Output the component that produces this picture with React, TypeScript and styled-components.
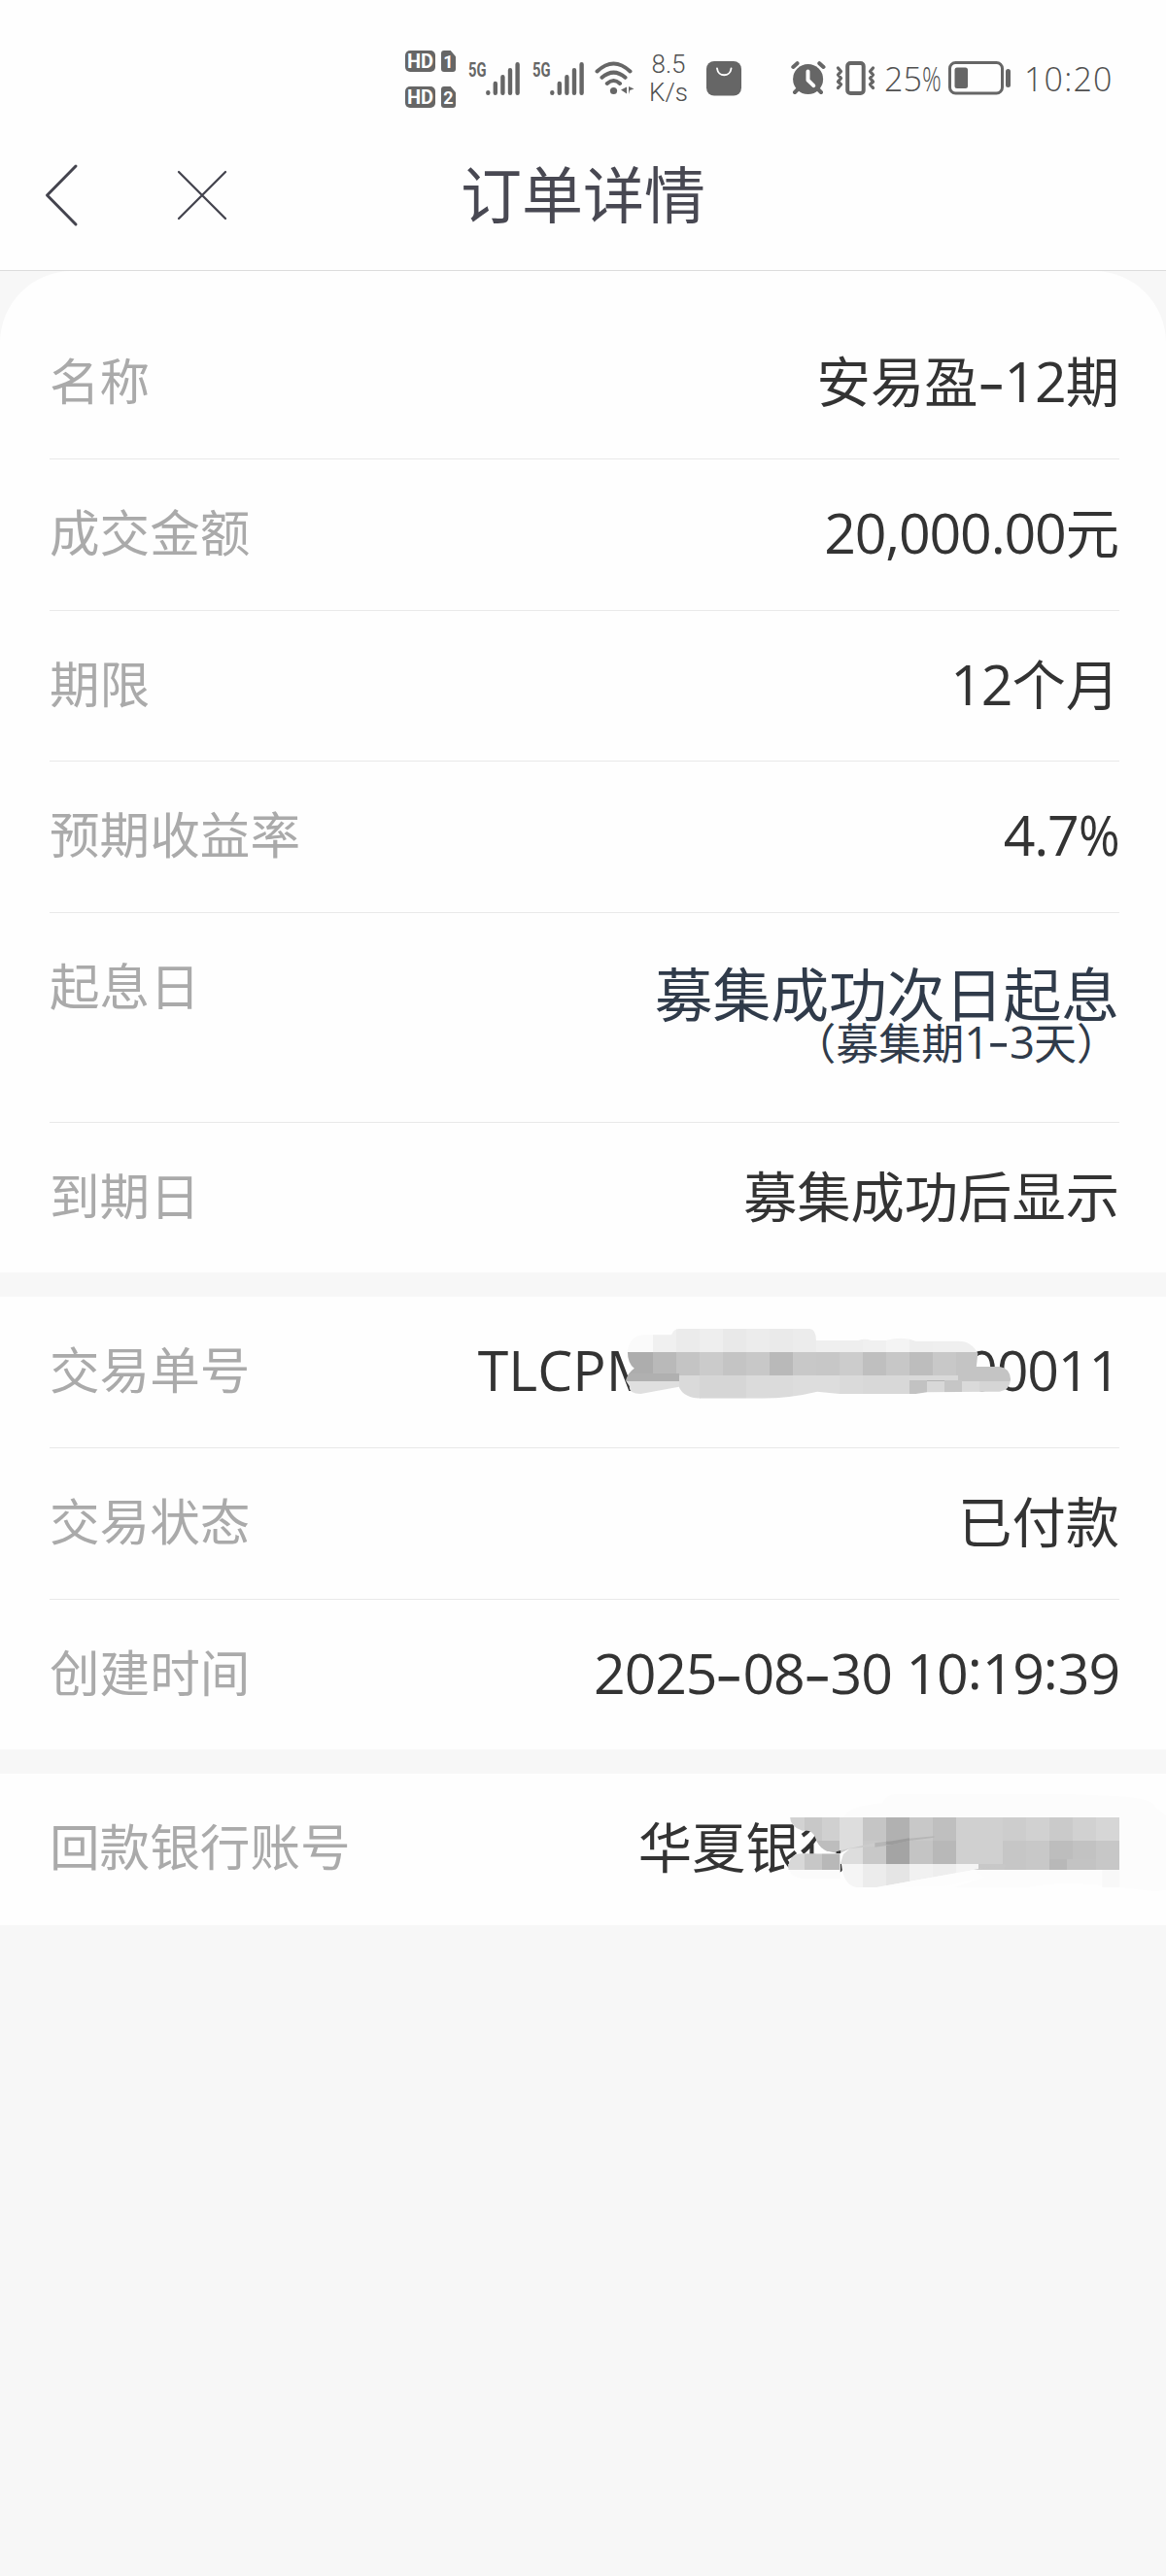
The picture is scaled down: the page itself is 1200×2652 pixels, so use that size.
import React from "react";
import styled, { createGlobalStyle, css } from "styled-components";

const GlobalStyle = createGlobalStyle`
  body { margin: 0; background: #f7f7f7; }
  * { box-sizing: border-box; }
`;

const cjk = `"Noto Sans CJK SC", sans-serif`;

const Page = styled.main`
  width: 1200px;
  min-height: 2652px;
  background: #f7f7f7;
  font-family: ${cjk};
  color: #333;
  overflow: hidden;
`;

const StatusBar = styled.div`
  height: 126px;
  padding: 35px 50px 0 417px;
  background: #fefefe;
  display: flex;
  align-items: center;
  color: #666;
  svg { display: block; flex: none; }
`;

const SimStack = styled.div`
  display: flex;
  flex-direction: column;
  gap: 15px;
  width: 52px;
  height: 59px;
  padding-top: 1px;
`;

const SimLine = styled.div`
  display: flex;
  gap: 6px;
`;

const Tag = styled.span<{ $w: number; $cut?: boolean }>`
  width: ${(p) => p.$w}px;
  height: 22px;
  border-radius: 5px;
  background: #666;
  color: #fff;
  font: 700 20px/23px Roboto, sans-serif;
  text-align: center;
  ${(p) =>
    p.$cut &&
    css`
      border-radius: 3px;
      font-size: 18px;
      clip-path: polygon(0 0, 65% 0, 100% 28%, 100% 100%, 0 100%);
    `}
`;

const Signal = styled.div<{ $ml: number }>`
  display: flex;
  width: 53px;
  height: 34px;
  margin-left: ${(p) => p.$ml}px;
`;

const NetType = styled.span`
  width: 18px;
  font: 700 21px/16px Roboto, sans-serif;
  transform: scaleX(0.7);
  transform-origin: left top;
`;

const Speed = styled.div`
  width: 44px;
  margin-left: 12px;
  font: 300 26px/29px Roboto, sans-serif;
  text-align: center;
  color: #505050;
`;

const Gap = styled.span<{ $w: number }>`
  flex: none;
  width: ${(p) => p.$w}px;
`;

const Percent = styled.span`
  width: 58px;
  margin-left: 8px;
  font: 300 34px/40px "Open Sans", sans-serif;
  color: #505050;
  white-space: nowrap;
  span {
    display: inline-block;
    width: 20px;
    transform: scaleX(0.72);
    transform-origin: left;
  }
`;

const Clock = styled.span`
  margin-left: 13px;
  font: 300 34px/40px "Open Sans", sans-serif;
  color: #505050;
  letter-spacing: 1.2px;
`;

const NavBar = styled.header`
  height: 153px;
  background: #fefefe;
  border-bottom: 1px solid #dcdcdc;
  display: grid;
  grid-template-columns: 240px 1fr 240px;
  align-items: center;
`;

const NavButtons = styled.div`
  display: flex;
  align-items: center;
  gap: 100px;
  padding: 0 0 2px 46px;
  svg { display: block; flex: none; }
`;

const Title = styled.h1`
  margin: 0;
  padding-bottom: 10px;
  text-align: center;
  font-size: 63px;
  font-weight: 400;
  line-height: 90px;
  color: #484852;
`;

const Section = styled.section<{ $first?: boolean }>`
  background: #fefefe;
  padding: 0 48px 0 51px;
  margin-bottom: 25px;
  ${(p) =>
    p.$first &&
    css`
      padding-top: 38px;
      border-radius: 74px 74px 0 0;
    `}
`;

const Row = styled.div<{ $tall?: boolean }>`
  display: flex;
  justify-content: space-between;
  height: ${(p) => (p.$tall ? 216 : 155.4)}px;
  & + & { border-top: 1px solid #e9e9e9; }
`;

const Label = styled.span`
  font-size: 51.6px;
  line-height: 146px;
  color: #aaa;
  white-space: nowrap;
`;

const Value = styled.span`
  position: relative;
  display: flex;
  font-size: 55.3px;
  line-height: 146px;
  white-space: pre;
`;

const Num = styled.span<{ $wide?: boolean }>`
  padding-top: 2px;
  font-family: "Open Sans", ${cjk};
  font-size: 1.035em;
  letter-spacing: ${(p) => (p.$wide ? 0 : "-0.02em")};
  word-spacing: 1px;
`;

const Colon = styled.span`
  vertical-align: 0.08em;
  line-height: 0;
  letter-spacing: 0;
`;

const PercentSign = styled.span`
  display: inline-block;
  width: 0.74em;
  transform: scaleX(0.9);
  transform-origin: left;
`;

const Dash = styled.span`
  padding-top: 5px;
  font-family: Inter, sans-serif;
  font-size: 1.04em;
  font-weight: 400;
  letter-spacing: 0.01em;
  transform: scaleX(1.15);
`;

const StartValue = styled.div`
  display: flex;
  flex-direction: column;
  align-items: flex-end;
  padding-top: 48px;
  color: #303b4a;
  font-size: 59.8px;
  line-height: 66px;
  white-space: nowrap;
`;

const StartNote = styled.div`
  display: flex;
  margin-top: -8px;
  font-size: 44px;
  line-height: 52px;
  ${Num} { padding-top: 0; }
  ${Dash} { padding-top: 2px; }
`;

const Mosaic = styled.svg`
  position: absolute;
  right: -48px;
  width: 600px;
`;

/** Raises colons to the middle of the digits and narrows percent signs. */
function numeric(text: string) {
  return text.split(/([:%])/).map((s, i) =>
    s === ":" ? <Colon key={i}>:</Colon> : s === "%" ? <PercentSign key={i}>%</PercentSign> : s
  );
}

/** Splits a string so that digits and dashes get their own faces. */
function Mixed({ text }: { text: string }) {
  const parts = text.match(/-|[\x20-\x2c\x2e-\x7e]+|[^\x20-\x7e]+/g) ?? [];
  return (
    <>
      {parts.map((p, i) =>
        p === "-" ? (
          <Dash key={i}>{p}</Dash>
        ) : /^[\x20-\x7e]/.test(p) ? (
          <Num key={i}>{numeric(p)}</Num>
        ) : (
          <span key={i}>{p}</span>
        )
      )}
    </>
  );
}

function SignalIcon({ ml }: { ml: number }) {
  return (
    <Signal $ml={ml}>
      <NetType>5G</NetType>
      <svg width="35" height="34" viewBox="0 0 35 34" stroke="#666" strokeWidth="4.4" strokeLinecap="round">
        <path d="M2.3 31.3v.4M9.8 22v9.7M17.4 15.3v16.4M25 8.2v23.5M32.6 2.3v29.4" />
      </svg>
    </Signal>
  );
}

const WifiIcon = () => (
  <svg width="42" height="35" viewBox="0 0 42 35" fill="none" stroke="#666" strokeWidth="4" strokeLinecap="round">
    <path d="M2.500 10.500Q19.500-5.500 36.500 10.500M7.500 16.800Q19.500 6.500 31.500 16.800M12.800 23Q19.500 17 26 23" />
    <circle cx="19.500" cy="30.500" r="3.600" fill="#666" stroke="none" />
    <path d="M33 26.500v7l-6-4zM35 26v8l1.200-4 4.300-1.500z" fill="#666" stroke="none" />
  </svg>
);

const BagIcon = () => (
  <svg width="36" height="36" viewBox="0 0 36 36" fill="none">
    <rect width="36" height="35.500" rx="8" fill="#666" />
    <path d="M11 7.500c1 9 13.500 9 14.500 0" stroke="#fff" strokeWidth="1.900" strokeLinecap="round" />
  </svg>
);

const AlarmIcon = () => (
  <svg width="36" height="35" viewBox="0 0 36 35" fill="none" strokeLinecap="round">
    <circle cx="17.600" cy="18.500" r="15.500" fill="#666" />
    <path d="M2.300 6 6.500 2.200M33.500 6 29.300 2.200M7 29l-3 3M28 29l3 3" stroke="#666" strokeWidth="4" />
    <path d="M17.500 10.500v9l5.800 5.600" stroke="#fff" strokeWidth="4" strokeLinejoin="round" />
  </svg>
);

const VibrateIcon = () => (
  <svg width="42" height="35" viewBox="0 0 42 35" fill="none" stroke="#666" strokeLinejoin="round" strokeLinecap="round">
    <rect x="12.200" y="2" width="16.500" height="31" rx="3" strokeWidth="4" />
    <path d="m2.500 7 3 3.500-3 3.500 3 3.500-3 3.500 3 3-3 3.500M38.500 7l-3 3.500 3 3.500-3 3.500 3 3.500-3 3 3 3.500" strokeWidth="3.300" />
  </svg>
);

const BatteryIcon = () => (
  <svg width="65" height="35" viewBox="0 0 65 35" fill="none">
    <rect x="1.500" y="1.500" width="54" height="31.500" rx="6" stroke="#666" strokeWidth="3" />
    <rect x="6.500" y="6.500" width="13.500" height="21.500" rx="2.500" fill="#666" />
    <rect x="59" y="8" width="5" height="19" rx="2.500" fill="#666" />
  </svg>
);

type Cell = [x: number, y: number, w: number, h: number, fill: string];

const orderCells: Cell[] = [
  [110, 80, 80, 76, "#fafafa"], [188, 80, 65, 76, "#f0f0f0"], [252, 80, 62, 76, "#ebebeb"],
  [314, 80, 63, 76, "#eeeeee"], [376, 80, 64, 76, "#e9e9e9"], [439, 80, 64, 76, "#ececec"],
  [502, 80, 63, 76, "#eaeaea"], [564, 80, 63, 76, "#ececec"], [627, 80, 63, 76, "#efefef"],
  [690, 80, 64, 76, "#eeeeee"], [753, 80, 63, 76, "#f0f0f0"], [815, 80, 64, 76, "#f4f4f4"],
  [878, 80, 64, 76, "#eeeeee"], [941, 80, 130, 76, "#efefef"],
  [110, 155, 80, 73, "#adadad"], [188, 155, 64, 73, "#b9b9b9"], [251, 155, 64, 73, "#c4c4c4"],
  [314, 155, 63, 73, "#cbcbcb"], [376, 155, 64, 73, "#c4c4c4"], [439, 155, 64, 73, "#c8c8c8"],
  [502, 155, 63, 73, "#b9b9b9"], [564, 155, 64, 73, "#c8c8c8"], [627, 155, 63, 73, "#c7c7c7"],
  [690, 155, 64, 73, "#cccccc"], [753, 155, 63, 73, "#bfbfbf"], [815, 155, 64, 73, "#c7c7c7"],
  [878, 155, 64, 73, "#bdbdbd"], [941, 155, 63, 73, "#c8c8c8"], [1003, 155, 160, 91, "#c4c4c4"],
  [110, 222, 148, 24, "#b0b0b0"], [110, 246, 148, 50, "#dfdfdf"],
  [258, 228, 57, 75, "#dadada"], [314, 228, 126, 75, "#d6d6d6"], [439, 228, 126, 75, "#dbdbdb"],
  [564, 228, 126, 75, "#dddddd"], [690, 228, 64, 75, "#dadada"], [753, 228, 125, 75, "#d8d8d8"],
  [878, 228, 130, 14, "#d9d9d9"], [878, 242, 47, 45, "#c2c2c2"], [925, 246, 47, 41, "#d8d8d8"],
  [925, 242, 47, 4, "#b4b4b4"], [972, 242, 47, 45, "#c6c6c6"], [1019, 246, 47, 41, "#dadada"],
  [1065, 246, 90, 41, "#d5d5d5"],
];

const bankCells: Cell[] = [
  [550, 126, 46, 112, "#d2d2d2"], [596, 126, 47, 112, "#c8c8c8"], [643, 126, 48, 72, "#d0d0d0"],
  [596, 198, 95, 40, "#bdbdbd"], [690, 126, 63, 146, "#dddddd"], [753, 126, 63, 72, "#c5c5c5"],
  [753, 198, 63, 73, "#c8c8c8"], [815, 126, 63, 72, "#b1b1b1"], [815, 198, 63, 73, "#a4a4a4"],
  [878, 126, 63, 72, "#c8c8c8"], [878, 198, 63, 73, "#c4c4c4"], [941, 126, 63, 72, "#bfbfbf"],
  [941, 198, 63, 73, "#b8b8b8"], [1003, 126, 127, 146, "#d0d0d0"], [1130, 126, 62, 72, "#cdcdcd"],
  [1192, 126, 63, 72, "#d1d1d1"], [1255, 126, 62, 72, "#cacaca"], [1317, 126, 63, 72, "#d1d1d1"],
  [1380, 126, 63, 72, "#d6d6d6"], [1130, 198, 62, 90, "#c6c6c6"], [1192, 198, 63, 90, "#c8c8c8"],
  [1255, 198, 62, 58, "#bdbdbd"], [1317, 198, 63, 58, "#c2c2c2"], [1380, 198, 63, 90, "#c7c7c7"],
  [1255, 256, 46, 32, "#b8b8b8"], [1301, 256, 79, 32, "#c3c3c3"], [1050, 271, 80, 17, "#c8c8c8"],
  [550, 238, 46, 50, "#d8d8d8"], [596, 238, 47, 50, "#c7c7c7"], [643, 238, 47, 50, "#b8b8b8"],
  [690, 270, 63, 72, "#f5f5f5"], [753, 270, 62, 72, "#ececec"], [815, 270, 63, 72, "#e5e5e5"],
  [878, 270, 63, 72, "#f1f1f1"], [941, 270, 63, 72, "#eeeeee"], [1003, 270, 60, 72, "#f4f4f4"],
];

const Cells = ({ cells }: { cells: Cell[] }) => (
  <>
    {cells.map(([x, y, w, h, fill], i) => (
      <rect key={i} x={x} y={y} width={w} height={h} fill={fill} shapeRendering="crispEdges" />
    ))}
  </>
);

const OrderMosaic = styled(Mosaic)`
  top: 5px;
  height: 130px;
`;
const BankMosaic = styled(Mosaic)`
  top: 3px;
  height: 160px;
`;
const HiddenDigits = styled.span<{ $w: number }>`
  width: ${(p) => p.$w}px;
`;

const basics = [
  ["名称", "安易盈-12期"],
  ["成交金额", "20,000.00元"],
  ["期限", "12个月"],
  ["预期收益率", "4.7%"],
];

export default function App() {
  return (
    <Page>
      <GlobalStyle />
      <StatusBar>
        <SimStack>
          <SimLine><Tag $w={31}>HD</Tag><Tag $w={15} $cut>1</Tag></SimLine>
          <SimLine><Tag $w={31}>HD</Tag><Tag $w={15} $cut>2</Tag></SimLine>
        </SimStack>
        <SignalIcon ml={13} />
        <SignalIcon ml={13} />
        <Gap $w={11} />
        <WifiIcon />
        <Speed>8.5<br />K/s</Speed>
        <Gap $w={17} />
        <BagIcon />
        <Gap $w={51} />
        <AlarmIcon />
        <Gap $w={10} />
        <VibrateIcon />
        <Percent>25<span>%</span></Percent>
        <Gap $w={8} />
        <BatteryIcon />
        <Clock>10:20</Clock>
      </StatusBar>
      <NavBar>
        <NavButtons>
          <svg width="36" height="66" viewBox="0 0 36 66" fill="none" stroke="#44444e" strokeWidth="3" strokeLinecap="round" strokeLinejoin="round">
            <path d="M32 3 2.500 33 32 63" />
          </svg>
          <svg width="52" height="52" viewBox="0 0 52 52" fill="none" stroke="#44444e" strokeWidth="2.300" strokeLinecap="round">
            <path d="m2 2 48 48M50 2 2 50" />
          </svg>
        </NavButtons>
        <Title>订单详情</Title>
      </NavBar>
      <Section $first>
        {basics.map(([label, value]) => (
          <Row key={label}>
            <Label>{label}</Label>
            <Value><Mixed text={value} /></Value>
          </Row>
        ))}
        <Row $tall>
          <Label>起息日</Label>
          <StartValue>
            募集成功次日起息
            <StartNote><Mixed text="（募集期1-3天）" /></StartNote>
          </StartValue>
        </Row>
        <Row>
          <Label>到期日</Label>
          <Value>募集成功后显示</Value>
        </Row>
      </Section>
      <Section>
        <Row>
          <Label>交易单号</Label>
          <Value>
            <Num $wide>TLCPM</Num>
            <HiddenDigits $w={319} />
            <Num>00011</Num>
            <OrderMosaic viewBox="0 0 1568 390" preserveAspectRatio="none">
              <clipPath id="orderBlob">
                <path d="M120 155Q124 105 165 103H238Q244 84 258 84H610Q627 86 627 120H740Q760 112 775 120H815Q860 106 895 122H1010Q1045 122 1062 160L1058 201H1120Q1148 205 1150 240Q1148 275 1120 278L925 280 895 285H690L630 278 Q560 298 480 299H320Q270 298 258 263L155 285Q122 285 125 262L115 244Q120 220 138 206Q120 190 120 155Z" />
              </clipPath>
              <g clipPath="url(#orderBlob)"><Cells cells={orderCells} /></g>
            </OrderMosaic>
          </Value>
        </Row>
        <Row>
          <Label>交易状态</Label>
          <Value>已付款</Value>
        </Row>
        <Row>
          <Label>创建时间</Label>
          <Value><Mixed text="2025-08-30 10:19:39" /></Value>
        </Row>
      </Section>
      <Section>
        <Row>
          <Label>回款银行账号</Label>
          <Value>
            华夏银行
            <HiddenDigits $w={274} />
            <BankMosaic viewBox="0 0 1568 480" preserveAspectRatio="none">
              <clipPath id="bankBlob">
                <path d="M557 126H1443V288H1050L1135 271 790 342H735Q700 335 695 270H690V288H552Q552 238 590 238H682Q640 235 625 190Q618 162 590 167Q557 155 557 126Z" />
              </clipPath>
              <path d="M700 126Q715 90 805 82Q815 55 840 54H1310L1430 60Q1535 66 1540 95L1568 120V350L1540 355 1440 342Q1290 320 1200 342H1000L1080 310 700 290Z" fill="#fcfcfc" />
              <path d="M552 270h140v45H590Q552 310 552 270Z" fill="#fbfbfb" />
              <g clipPath="url(#bankBlob)"><Cells cells={bankCells} /></g>
              <path d="M1396 288h47v54h-47z" fill="#f8f8f8" />
              <path d="M790 342 1135 271 1050 288 1080 312 975 338Z" fill="#fdfdfd" />
              <path d="M1050 288 1135 270V288Z" fill="#c8c8c8" />
              <path d="M625 238 660 231 690 238 718 222 700 240 692 271V238Z" fill="#fff" />
              <path d="M680 231 785 205V215L718 222 690 237Z" fill="#cccccc" />
              <path d="M681 232 693 228V237H681Z" fill="#333" />
              <path d="M785 205 878 191 945 184V188L878 198 830 211 785 218Z" fill="#b6b6b6" />
              <path d="M815 202 878 190V198L830 211H815Z" fill="#9c9c9c" />
            </BankMosaic>
          </Value>
        </Row>
      </Section>
    </Page>
  );
}
